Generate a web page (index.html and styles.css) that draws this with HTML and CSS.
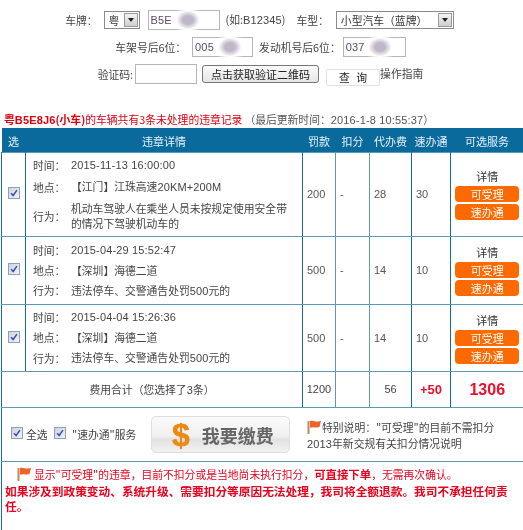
FILE: index.html
```html
<!DOCTYPE html>
<html lang="zh">
<head>
<meta charset="utf-8">
<title>违章查询</title>
<link rel="stylesheet" href="styles.css">
</head>
<body>
<form class="query">
  <div class="frow r1">
    <span>车牌&#xFF1A;</span>
    <div class="sel sel-prov"><span class="sel-text">粤</span><span class="sel-btn"><i></i></span></div>
    <div class="inp w72"><span class="num">B5E</span><span class="blob"></span></div>
    <span class="hint">(如:<span class="num">B12345</span>)</span>
    <span class="type-label">车型&#xFF1A;</span>
    <div class="sel sel-type"><span class="sel-text">小型汽车&#xFF08;蓝牌&#xFF09;</span><span class="sel-btn"><i></i></span></div>
  </div>
  <div class="frow r2">
    <span>车架号后6位&#xFF1A;</span>
    <div class="inp w61"><span class="num">005</span><span class="blob"></span></div>
    <span>发动机号后6位&#xFF1A;</span>
    <div class="inp w63"><span class="num">037</span><span class="blob"></span></div>
  </div>
  <div class="frow r3">
    <span>验证码&#x3A;</span>
    <div class="inp w62"></div>
    <button type="button" class="qr">点击获取验证二维码</button>
    <button type="button" class="go">查 询</button>
    <span class="guide">操作指南</span>
  </div>
</form>

<p class="title"><b>粤<span class="num">B5E8J6</span>(小车)</b>的车辆共有3条未处理的违章记录<span class="updated">&#xFF08;最后更新时间&#xFF1A;<span class="num">2016-1-8 10:55:37</span>&#xFF09;</span></p>

<table class="grid">
  <colgroup>
    <col class="c1"><col class="c2"><col class="c3"><col class="c4"><col class="c5"><col class="c6"><col class="c7">
  </colgroup>
  <thead>
    <tr><th>选</th><th>违章详情</th><th>罚款</th><th>扣分</th><th>代办费</th><th>速办通</th><th>可选服务</th></tr>
  </thead>
  <tbody>
    <tr class="row-a item">
      <td class="ctr"><span class="check"><svg viewBox="0 0 12 12" width="10" height="10"><path d="M2.500 6.200 5 9 9.500 2.500" fill="none" stroke="#3a50b8" stroke-width="1.800"/></svg></span></td>
      <td class="detail">
        <div class="dl">
          <span>时间&#xFF1A;</span><span class="num">2015-11-13 16:00:00</span>
          <span>地点&#xFF1A;</span><span>【江门】江珠高速<span class="num">20KM+200M</span></span>
          <span>行为&#xFF1A;</span><span class="act">机动车驾驶人在乘坐人员未按规定使用安全带的情况下驾驶机动车的</span>
        </div>
      </td>
      <td class="val">200</td><td class="val">-</td><td class="val">28</td><td class="val">30</td>
      <td class="svc"><div>详情</div><a class="tag">可受理</a><a class="tag">速办通</a></td>
    </tr>
    <tr class="row-b item">
      <td class="ctr"><span class="check"><svg viewBox="0 0 12 12" width="10" height="10"><path d="M2.500 6.200 5 9 9.500 2.500" fill="none" stroke="#3a50b8" stroke-width="1.800"/></svg></span></td>
      <td class="detail">
        <div class="dl">
          <span>时间&#xFF1A;</span><span class="num">2015-04-29 15:52:47</span>
          <span>地点&#xFF1A;</span><span>【深圳】海德二道</span>
          <span>行为&#xFF1A;</span><span>违法停车、交警通告处罚<span class="num">500</span>元的</span>
        </div>
      </td>
      <td class="val">500</td><td class="val">-</td><td class="val">14</td><td class="val">10</td>
      <td class="svc"><div>详情</div><a class="tag">可受理</a><a class="tag">速办通</a></td>
    </tr>
    <tr class="row-b item">
      <td class="ctr"><span class="check"><svg viewBox="0 0 12 12" width="10" height="10"><path d="M2.500 6.200 5 9 9.500 2.500" fill="none" stroke="#3a50b8" stroke-width="1.800"/></svg></span></td>
      <td class="detail">
        <div class="dl">
          <span>时间&#xFF1A;</span><span class="num">2015-04-04 15:26:36</span>
          <span>地点&#xFF1A;</span><span>【深圳】海德二道</span>
          <span>行为&#xFF1A;</span><span>违法停车、交警通告处罚<span class="num">500</span>元的</span>
        </div>
      </td>
      <td class="val">500</td><td class="val">-</td><td class="val">14</td><td class="val">10</td>
      <td class="svc"><div>详情</div><a class="tag">可受理</a><a class="tag">速办通</a></td>
    </tr>
    <tr class="row-total">
      <td colspan="2" class="sum">费用合计&#xFF08;您选择了<span class="num">3</span>条&#xFF09;</td>
      <td class="tot">1200</td><td></td><td class="tot">56</td>
      <td class="tot plus">+50</td><td class="tot grand">1306</td>
    </tr>
    <tr class="row-pay">
      <td colspan="7">
        <div class="pay">
          <label class="opt o1"><span class="check"><svg viewBox="0 0 12 12" width="10" height="10"><path d="M2.500 6.200 5 9 9.500 2.500" fill="none" stroke="#3a50b8" stroke-width="1.800"/></svg></span>全选</label>
          <label class="opt o2"><span class="check"><svg viewBox="0 0 12 12" width="10" height="10"><path d="M2.500 6.200 5 9 9.500 2.500" fill="none" stroke="#3a50b8" stroke-width="1.800"/></svg></span>"速办通"服务</label>
          <button type="button" class="paybtn"><span class="dollar">$</span><span class="paytext">我要缴费</span></button>
          <div class="special">
            <svg class="flag" viewBox="0 0 15 14" width="15" height="14"><path d="M1.500 1v13" stroke="#b98a5a" stroke-width="2"/><path d="M3 1c3-1.200 5 1 8 .6l3-.6-1.500 6c-3 1.200-6-.8-9.500.8z" fill="#f0622a"/></svg>特别说明&#xFF1A;"可受理"的目前不需扣分<br><span class="num">2013</span>年新交规有关扣分情况说明
          </div>
        </div>
      </td>
    </tr>
    <tr class="row-note">
      <td colspan="7">
        <div class="note">
          <div class="note-first"><svg class="flag f2" viewBox="0 0 15 14" width="15" height="14"><path d="M1.500 1v13" stroke="#b98a5a" stroke-width="2"/><path d="M3 1c3-1.200 5 1 8 .6l3-.6-1.500 6c-3 1.200-6-.8-9.500.8z" fill="#f0622a"/></svg>显示"可受理"的违章&#xFF0C;目前不扣分或是当地尚未执行扣分&#xFF0C;<b>可直接下单</b>&#xFF0C;无需再次确认。</div>
          <b class="note-bold">如果涉及到政策变动、系统升级、需要扣分等原因无法处理&#xFF0C;我司将全额退款。我司不承担任何责任。</b>
        </div>
      </td>
    </tr>
  </tbody>
</table>
</body>
</html>
```

FILE: styles.css
```css
html, body { margin: 0; padding: 0; height: 530px; overflow: hidden; background: #fff; }
body { font: 10.8px/15px "Noto Sans CJK SC", "Liberation Sans", sans-serif; color: #444; filter: blur(.3px); }
.num { font-family: "Liberation Sans", sans-serif; font-size: 11px; letter-spacing: .15px; }
.query { height: 110px; padding-top: 10px; box-sizing: border-box; }
.frow { display: flex; justify-content: center; align-items: center; width: 521px; white-space: nowrap; }
.r1 { height: 20px; width: 519px; }
.r2 { height: 20px; margin-top: 7px; }
.r3 { height: 20px; margin-top: 7px; }
.r3 > * { flex: none; }
.sel { display: flex; align-items: center; height: 18px; border: 1px solid #8a8a8a; box-sizing: border-box; background: #fff; color: #333; }
.sel-prov { width: 36px; margin: 0 8px 0 6px; }
.sel-type { width: 118px; margin-left: 7px; }
.sel-text { flex: 1; padding-left: 4px; white-space: nowrap; overflow: hidden; }
.sel-btn { width: 14px; height: 14px; margin-right: 1px; background: linear-gradient(#f4f4f4, #cfcfcf); border: 1px solid #999; box-sizing: border-box; display: flex; align-items: center; justify-content: center; }
.sel-btn i { width: 0; height: 0; border: 3px solid transparent; border-top: 4px solid #222; border-bottom: 0; }
.hint { margin-left: 6px; }
.type-label { margin-left: 11px; }
.inp { display: flex; align-items: center; height: 20px; box-sizing: border-box; border: 1px solid #b5b5b5; padding-left: 2px; color: #5a4a6a; background: #fff; }
.w72 { width: 72px; }
.w61 { width: 61px; margin: 0 6px; }
.w63 { width: 63px; margin-left: 2px; }
.w62 { width: 62px; margin-left: 2px; }
.blob { width: 34px; height: 28px; margin: -5px 0 -5px -1px; background: radial-gradient(ellipse closest-side, #c0b8c8 0 30%, #fff 68%, rgba(255,255,255,0) 100%); }
.qr { width: 117px; height: 18px; margin-left: 5px; padding: 0; font: inherit; font-size: 11px; color: #222; background: linear-gradient(#fafafa, #e6e6e6); border: 1px solid #777; border-radius: 3px; }
.go { width: 54px; height: 17px; margin: 6px 0 0 7px; padding: 0; font: inherit; color: #222; background: #fff; border: 1px solid #e2e2e2; border-radius: 2px; word-spacing: 4px; }
.guide { margin-top: -1px; }
.title { margin: 0 0 0 4px; height: 18px; line-height: 18px; color: #e00010; white-space: nowrap; }
.title .num { font-weight: 700; }
.updated { color: #555; margin-left: 2px; }
.updated .num { font-weight: 400; }
.grid { table-layout: fixed; width: 522px; margin: 0 0 0 1px; border-collapse: collapse; border-top: 2px solid #0a6a9a; }
.c1 { width: 24px; }
.c2 { width: 277px; }
.c3 { width: 33px; }
.c4 { width: 34px; }
.c5 { width: 42px; }
.c6 { width: 39px; }
.c7 { width: 73px; }
.grid th { height: 22px; padding: 0; background: #0a6a9c; color: #e8f2f8; font-weight: 400; font-size: 11px; text-align: center; }
.grid td { padding: 0; border: 1px solid #5a9ab8; }
.grid td:first-child { border-left-color: #1a6f9c; }
.grid td:last-child { border-right: 0; }
.item td:nth-child(1), .item td:nth-child(2), .item td:nth-child(5), .item td:nth-child(6) { border-right-color: #1a6a94; }
.row-total td:nth-child(1), .row-total td:nth-child(4), .row-total td:nth-child(5) { border-right-color: #1a6a94; }
.row-a td { height: 83px; }
.row-b td { height: 67px; }
.row-b + .row-b td { height: 66px; }
.row-total td { height: 35px; }
.row-pay td { height: 53px; }
.row-note td { height: 72px; border-bottom: 0; vertical-align: top; }
.check { display: block; width: 10px; height: 10px; border: 1px solid #8fa0b8; background: linear-gradient(135deg, #cfd3dc, #f2f2f6); line-height: 0; }
.ctr .check { margin: 0 auto 3px; }
.detail { padding: 0 8px 0 7px !important; }
.dl { display: grid; grid-template-columns: 38px 1fr; row-gap: 6px; align-items: center; }
.row-b .dl { row-gap: 5px; }
.val { padding-left: 4px !important; font-family: "Liberation Sans", sans-serif; font-size: 11px; color: #555; }
.svc { text-align: center; font-size: 11px; color: #333; }
.tag { display: block; width: 64px; height: 16px; line-height: 16px; margin: 2px auto 0; background: #ff6a00; color: #fff; border-radius: 4px; }
.sum, .tot { text-align: center; }
.tot { font-family: "Liberation Sans", sans-serif; font-size: 11px; }
.plus.tot { color: #e8102a; font-weight: 700; font-size: 13px; }
.grand.tot { color: #e8102a; font-weight: 700; font-size: 16px; }
.pay { display: flex; align-items: center; padding-left: 9px; }
.opt { display: flex; align-items: center; flex: none; white-space: nowrap; }
.opt .check { flex: none; margin-top: -3px; }
.o1 { width: 43px; gap: 3px; }
.o2 { width: 81px; gap: 6px; }
.paybtn { flex: none; display: flex; align-items: center; width: 139px; height: 37px; margin: 0 0 0 16px; padding: 0 0 0 20px; border: 1px solid #ddd; border-radius: 5px; background: linear-gradient(#fbfbfb, #f0f0f0 55%, #e2e2e2 65%, #f2f2f2); }
.dollar { font: 700 32px/32px "Liberation Sans", sans-serif; color: #ee8a10; text-shadow: 0 0 1px #c96a00; }
.paytext { margin-left: 12px; font: 700 18px "Noto Sans CJK SC", sans-serif; color: #666; white-space: nowrap; }
.special { flex: none; margin: 1px 0 0 17px; line-height: 16px; white-space: nowrap; }
.flag { vertical-align: -2px; }
.note { padding: 4px 0 0 3px; color: #e8001c; }
.note-first { font-size: 10.8px; line-height: 16px; }
.note-first b { font-size: 11.4px; }
.note-bold { display: block; margin-top: 1px; font-size: 11.7px; line-height: 15px; }
.f2 { margin: 0 2px 0 12px; }
```
